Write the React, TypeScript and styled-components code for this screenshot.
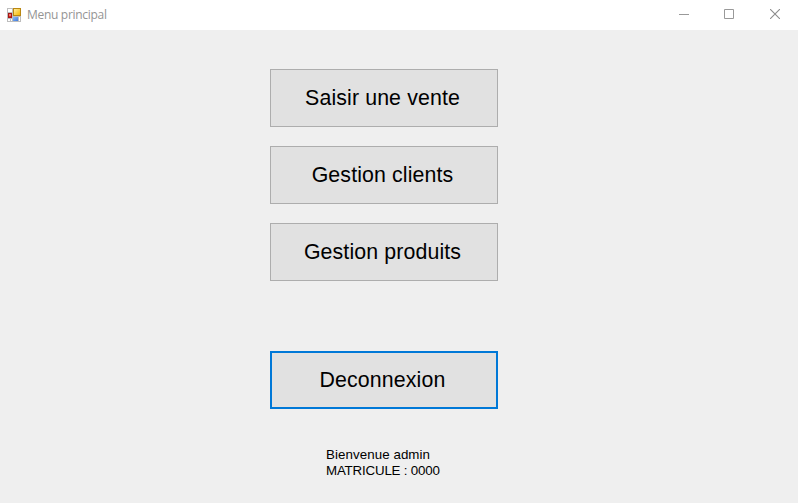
import React from 'react';
import styled, { createGlobalStyle } from 'styled-components';

const GlobalStyle = createGlobalStyle`
  body { margin: 0; background: #efefef; overflow: hidden; }
  * { box-sizing: border-box; }
`;

const Window = styled.div`
  width: 798px;
  height: 503px;
  display: flex;
  flex-direction: column;
  background: #efefef;
  color: #000;
  font-family: 'Liberation Sans', Arial, sans-serif;
`;

const TitleBar = styled.header`
  height: 30px;
  display: flex;
  align-items: center;
  padding-left: 7px;
  background: #fff;
`;

const Title = styled.span`
  flex: 1;
  margin-left: 6px;
  font: 12px/16px 'Open Sans', 'Noto Sans', sans-serif;
  letter-spacing: -0.3px;
  color: #949494;
`;

const CaptionButton = styled.button<{ $width: number }>`
  width: ${(p) => p.$width}px;
  height: 30px;
  display: flex;
  align-items: center;
  justify-content: center;
  padding: 0 0 2px;
  border: 0;
  background: none;
`;

const Content = styled.main`
  display: flex;
  flex-direction: column;
  align-items: flex-start;
  padding: 39px 0 0 270px;
`;

const Menu = styled.nav`
  display: flex;
  flex-direction: column;
  gap: 19px;
  margin-bottom: 70px;
`;

const MenuButton = styled.button<{ $focused?: boolean }>`
  width: 228px;
  height: 58px;
  display: flex;
  align-items: center;
  justify-content: center;
  padding: 0 3px 0 0;
  border: ${(p) => (p.$focused ? '2px solid #0078d7' : '1px solid #adadad')};
  background: #e1e1e1;
  color: #000;
  font: 21.33px/24px 'Liberation Sans', Arial, sans-serif;
  letter-spacing: 0.12px;
  white-space: nowrap;
`;

const UserInfo = styled.div`
  margin: 38px 0 0 56px;
  font-size: 13.33px;
  line-height: 16px;
  white-space: nowrap;
`;

const InfoLine = styled.div<{ $spacing: number }>`
  letter-spacing: ${(p) => p.$spacing}px;
`;

const FormIcon = () => (
  <svg width="14" height="14" viewBox="0 0 14 14" shapeRendering="crispEdges">
    <defs>
      <linearGradient id="gold" x1="0" y1="0" x2="1" y2="1">
        <stop offset="0" stopColor="#ffeb9c" />
        <stop offset="1" stopColor="#f5b800" />
      </linearGradient>
      <linearGradient id="blue" x1="0" y1="0" x2="1" y2="1">
        <stop offset="0" stopColor="#8dbcf8" />
        <stop offset="1" stopColor="#3e79dd" />
      </linearGradient>
    </defs>
    <path d="M0 0h14v14H0z" fill="#bdbdbd" />
    <path d="M1 1h4v3H1zM1 11h2v2H1zM4 11h1v2H4zM12 9h1v4h-1z" fill="#fff" />
    <path d="M6 0h8v8H6z" fill="#b98712" />
    <path d="M7 1h6v6H7z" fill="url(#gold)" />
    <path d="M1 5h4v5H1z" fill="#a51515" />
    <path d="M2 6h2v2H2z" fill="#ef7767" />
    <path d="M2 8h2v1H2z" fill="#d82c22" />
    <path d="M6 9h5v4H6z" fill="url(#blue)" />
  </svg>
);

const MinimizeIcon = () => (
  <svg width="10" height="10" shapeRendering="crispEdges">
    <path d="M0 5h10v1H0z" fill="#999" />
  </svg>
);

const MaximizeIcon = () => (
  <svg width="10" height="10">
    <path d="M.5.5h9v9h-9z" fill="none" stroke="#999" />
  </svg>
);

const CloseIcon = () => (
  <svg width="10" height="10">
    <path d="M0 0l10 10M10 0L0 10" fill="none" stroke="#8c8c8c" strokeWidth="1.1" />
  </svg>
);

export default function App() {
  return (
    <>
      <GlobalStyle />
      <Window>
        <TitleBar>
          <FormIcon />
          <Title>Menu principal</Title>
          <CaptionButton $width={46} aria-label="Réduire"><MinimizeIcon /></CaptionButton>
          <CaptionButton $width={44} aria-label="Agrandir"><MaximizeIcon /></CaptionButton>
          <CaptionButton $width={47} aria-label="Fermer"><CloseIcon /></CaptionButton>
        </TitleBar>
        <Content>
          <Menu>
            <MenuButton>Saisir une vente</MenuButton>
            <MenuButton>Gestion clients</MenuButton>
            <MenuButton>Gestion produits</MenuButton>
          </Menu>
          <MenuButton $focused>Deconnexion</MenuButton>
          <UserInfo>
            <InfoLine $spacing={0.07}>Bienvenue admin</InfoLine>
            <InfoLine $spacing={-0.19}>MATRICULE : 0000</InfoLine>
          </UserInfo>
        </Content>
      </Window>
    </>
  );
}
